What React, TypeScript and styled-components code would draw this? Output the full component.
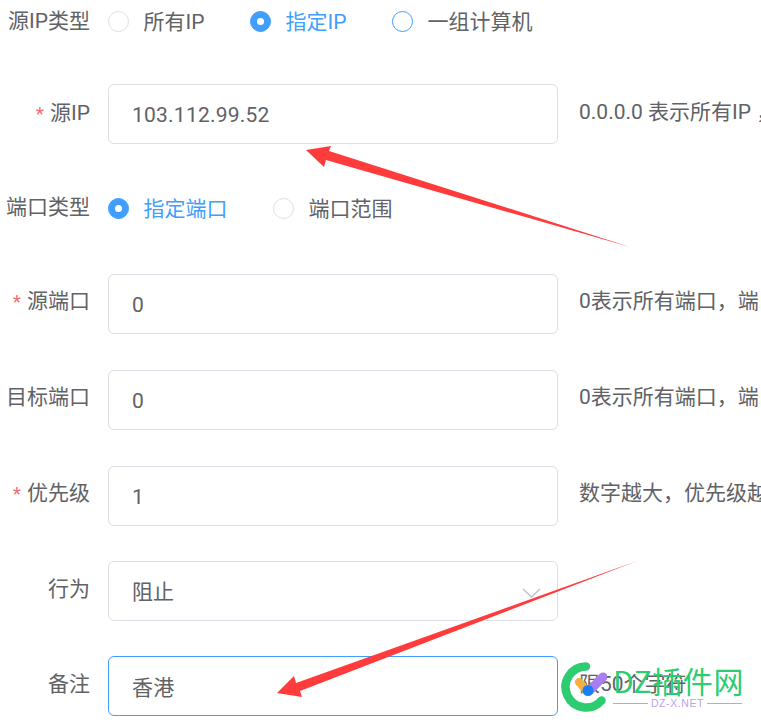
import React from 'react'
import styled, { createGlobalStyle } from 'styled-components'

const GlobalStyle = createGlobalStyle`
  html, body {
    margin: 0;
    height: 100%;
    overflow: hidden;
    background: #fff;
    font-family: Roboto, "Noto Sans CJK SC", sans-serif;
  }
`

const Page = styled.div`
  position: relative;
  width: 761px;
  height: 726px;
  overflow: hidden;
`

const Row = styled.div<{ $height?: number; $after?: number }>`
  display: flex;
  align-items: center;
  height: ${(p) => p.$height ?? 60}px;
  margin-bottom: ${(p) => p.$after ?? 36}px;
  white-space: nowrap;
`

const Label = styled.label<{ $lift?: number }>`
  flex: none;
  width: 90px;
  margin-right: 18px;
  padding-bottom: ${(p) => p.$lift ?? 10}px;
  text-align: right;
  font-size: 21px;
  color: #606266;
`

const Star = styled.span`
  margin-right: 6px;
  color: #f56c6c;
  font-size: 19px;
`

const RadioGroup = styled.div`
  display: flex;
  align-items: center;
  gap: 45.5px;
`

const RadioItem = styled.div<{ $checked?: boolean }>`
  display: flex;
  align-items: center;
  gap: 14.5px;
  font-size: 21px;
  color: ${(p) => (p.$checked ? '#409eff' : '#606266')};
`

const RadioText = styled.span`
  padding-bottom: 3px;
`

const RadioMark = styled.span<{ $checked?: boolean; $hover?: boolean }>`
  box-sizing: border-box;
  width: 21px;
  height: 21px;
  border-radius: 50%;
  border: 1px solid ${(p) => (p.$checked || p.$hover ? '#409eff' : '#dcdfe6')};
  background: ${(p) => (p.$checked ? '#409eff' : '#fff')};
  display: flex;
  align-items: center;
  justify-content: center;

  &::after {
    content: '';
    width: 7px;
    height: 7px;
    border-radius: 50%;
    background: #fff;
  }
`

const Input = styled.input<{ $focused?: boolean; $numeric?: boolean }>`
  box-sizing: border-box;
  flex: none;
  width: 450px;
  height: 60px;
  padding: ${(p) => (p.$numeric ? '2px' : '0')} 23px 0;
  border: 1px solid ${(p) => (p.$focused ? '#409eff' : '#dcdfe6')};
  border-radius: 6px;
  outline: none;
  background: #fff;
  font: inherit;
  font-size: 21px;
  letter-spacing: 0.23px;
  color: #606266;
`

const SelectBox = styled.div`
  position: relative;
  flex: none;
  display: flex;
  align-items: center;
  box-sizing: border-box;
  width: 450px;
  height: 60px;
  padding: 0 23px 2px;
  border: 1px solid #dcdfe6;
  border-radius: 6px;
  font-size: 21px;
  color: #606266;
`

const Chevron = styled.svg`
  position: absolute;
  right: 16px;
  top: 26px;
`

const Hint = styled.span<{ $lift?: number }>`
  margin-left: 21px;
  padding-bottom: ${(p) => p.$lift ?? 10}px;
  font-size: 21px;
  color: #606266;
`

const Overlay = styled.svg`
  position: absolute;
  left: 0;
  top: 0;
  pointer-events: none;
`

const Watermark = styled.div`
  position: absolute;
  left: 561px;
  top: 660px;
  display: flex;
  gap: 6px;
  pointer-events: none;
`

const WatermarkText = styled.div`
  display: flex;
  flex-direction: column;
  width: 129px;
`

const WatermarkTitle = styled.div`
  font-family: "Noto Sans CJK SC", sans-serif;
  font-size: 30px;
  line-height: 40px;
  letter-spacing: 0.6px;
  color: #2ecc71;
  white-space: nowrap;
`

const WatermarkSub = styled.div`
  display: flex;
  align-items: center;
  gap: 3px;
  margin-top: -3px;
  font-family: "Liberation Sans", sans-serif;
  font-size: 10.5px;
  line-height: 12px;
  letter-spacing: 0.6px;
  color: #b9a3f0;

  &::before,
  &::after {
    content: '';
    flex: 1;
    height: 1px;
    background: #b9a3f0;
  }
`

export default function App() {
  return (
    <Page>
      <GlobalStyle />
      <Row $height={42} $after={42}>
        <Label $lift={4}>源IP类型</Label>
        <RadioGroup>
          <RadioItem>
            <RadioMark />
            <RadioText>所有IP</RadioText>
          </RadioItem>
          <RadioItem $checked>
            <RadioMark $checked />
            <RadioText>指定IP</RadioText>
          </RadioItem>
          <RadioItem>
            <RadioMark $hover />
            <RadioText>一组计算机</RadioText>
          </RadioItem>
        </RadioGroup>
      </Row>
      <Row $after={44}>
        <Label $lift={6}>
          <Star>*</Star>源IP
        </Label>
        <Input $numeric readOnly value="103.112.99.52" />
        <Hint $lift={8}>0.0.0.0 表示所有IP ，</Hint>
      </Row>
      <Row $height={40} $after={46}>
        <Label $lift={6}>端口类型</Label>
        <RadioGroup>
          <RadioItem $checked>
            <RadioMark $checked />
            <RadioText>指定端口</RadioText>
          </RadioItem>
          <RadioItem>
            <RadioMark />
            <RadioText>端口范围</RadioText>
          </RadioItem>
        </RadioGroup>
      </Row>
      <Row>
        <Label>
          <Star>*</Star>源端口
        </Label>
        <Input $numeric readOnly value="0" />
        <Hint>0表示所有端口，端口范围</Hint>
      </Row>
      <Row>
        <Label>目标端口</Label>
        <Input $numeric readOnly value="0" />
        <Hint>0表示所有端口，端口范围</Hint>
      </Row>
      <Row $after={35}>
        <Label>
          <Star>*</Star>优先级
        </Label>
        <Input $numeric readOnly value="1" />
        <Hint>数字越大，优先级越高</Hint>
      </Row>
      <Row $after={35}>
        <Label $lift={8}>行为</Label>
        <SelectBox>
          阻止
          <Chevron width="19" height="10" viewBox="0 0 19 10" fill="none">
            <path d="M1 1 L9.5 9 L18 1" stroke="#c0c4cc" strokeWidth="1.6" />
          </Chevron>
        </SelectBox>
      </Row>
      <Row>
        <Label $lift={8}>备注</Label>
        <Input $focused readOnly value="香港" />
        <Hint $lift={8}>限50个字符</Hint>
      </Row>

      <Overlay width="761" height="726" viewBox="0 0 761 726">
        <polygon points="306,150 331,146 329,151 630,247 326,160 324,167" fill="#ff3b3b" />
        <polygon points="277,693 294,676 296,683 637,561 300,691 302,697" fill="#ff3b3b" />
      </Overlay>

      <Watermark>
        <svg width="46" height="54" viewBox="561 660 46 54" fill="none">
          <path
            d="M586 666.5 A20.5 20.5 0 1 0 601.5 700.5"
            stroke="#2ecc71"
            strokeWidth="8.5"
            strokeLinecap="round"
          />
          <path d="M579 682 L586 690" stroke="#f5b041" strokeWidth="8" strokeLinecap="round" />
          <path d="M590 690 L603 677" stroke="#a97ef5" strokeWidth="9" strokeLinecap="round" />
          <circle cx="588" cy="690.5" r="5.5" fill="#1a7ff5" />
        </svg>
        <WatermarkText>
          <WatermarkTitle>DZ插件网</WatermarkTitle>
          <WatermarkSub>DZ-X.NET</WatermarkSub>
        </WatermarkText>
      </Watermark>
    </Page>
  )
}
